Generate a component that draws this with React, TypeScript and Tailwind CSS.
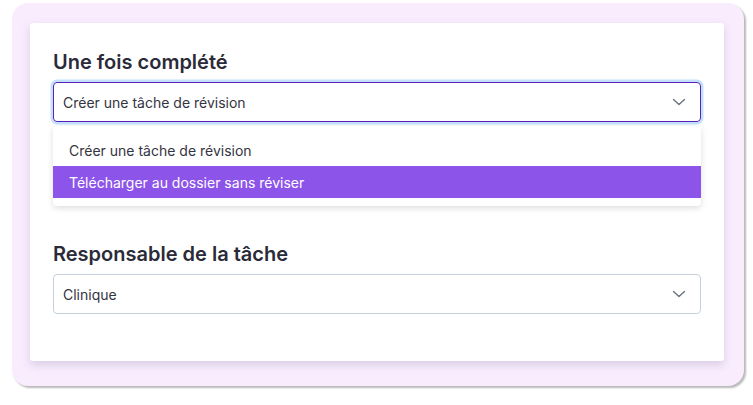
import { useState } from "react";

const OPTIONS = ["Créer une tâche de révision", "Télécharger au dossier sans réviser"];

function Chevron() {
  return (
    <svg width="14" height="8" viewBox="0 0 14 8" fill="none" aria-hidden className="shrink-0">
      <path d="M1.5 1.5 7 6.5l5.5-5" stroke="#6b7280" strokeWidth="1.4" strokeLinecap="round" strokeLinejoin="round" />
    </svg>
  );
}

export default function App() {
  const [open] = useState(true);
  const [hovered] = useState(1);

  return (
    <div className="h-[405px] w-[753px] bg-white pl-[12px] pt-[3px] font-['Inter',sans-serif]">
      <div className="h-[383px] w-[732px] rounded-[16px] bg-[#f8ecfd] pb-[25px] pl-[18px] pr-[20px] pt-[20px] shadow-[2px_2px_2px_rgba(0,0,0,0.28)]">
        <div className="h-full rounded-[3px] bg-white px-[23px] pt-[27px] shadow-[0_4px_8px_rgba(120,100,150,0.22)]">
          <h2 className="text-[20px] font-semibold leading-[24px] text-[#2b2a38]">Une fois complété</h2>
          <div className="relative mt-[8px]">
            <button
              type="button"
              className="flex h-[40px] w-full items-center justify-between rounded-[4px] border-[1.5px] border-[#5b21b6] pl-[9px] pr-[14px] text-left text-[14px] text-[#34343f] ring-[2.5px] ring-[#c4e1fb]"
            >
              <span>{OPTIONS[0]}</span>
              <Chevron />
            </button>
            {open && (
              <ul className="absolute left-0 right-0 top-[44px] z-10 rounded-[4px] bg-white py-[8px] shadow-[0_2px_6px_rgba(0,0,0,0.14)]">
                {OPTIONS.map((opt, i) => (
                  <li
                    key={opt}
                    className={
                      i === hovered
                        ? "flex h-[32px] items-center bg-[#8c54e8] pl-[16px] text-[14px] text-white"
                        : "flex h-[32px] items-center pl-[16px] text-[14px] text-[#34343f]"
                    }
                  >
                    {opt}
                  </li>
                ))}
              </ul>
            )}
          </div>

          <h2 className="mt-[120px] text-[20px] font-semibold leading-[24px] text-[#2b2a38]">Responsable de la tâche</h2>
          <button
            type="button"
            className="mt-[8px] flex h-[40px] w-full items-center justify-between rounded-[4px] border border-[#c6d0dc] pl-[9px] pr-[14px] text-left text-[14px] text-[#34343f]"
          >
            <span>Clinique</span>
            <Chevron />
          </button>
        </div>
      </div>
    </div>
  );
}
